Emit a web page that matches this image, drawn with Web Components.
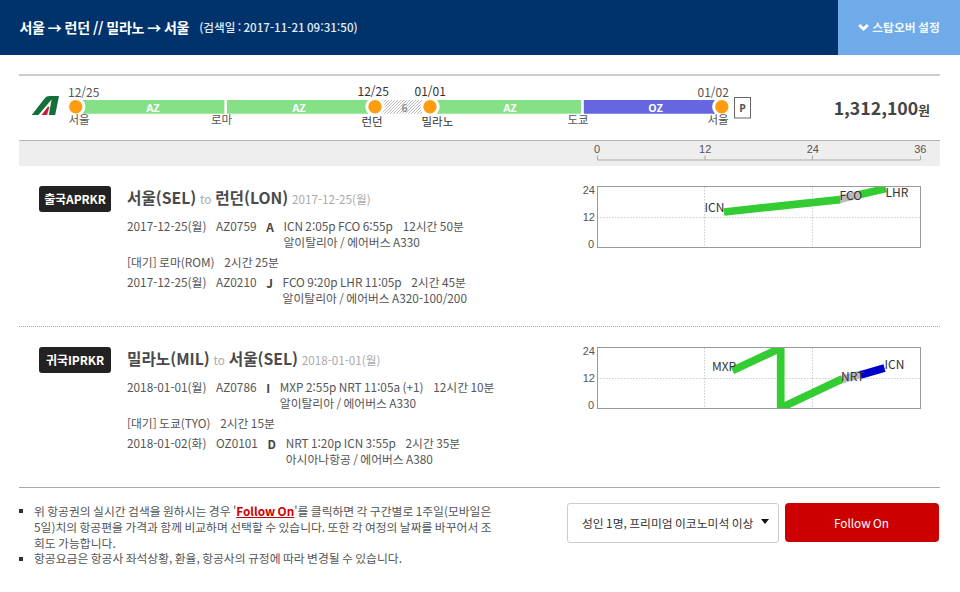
<!DOCTYPE html>
<html lang="ko">
<head>
<meta charset="utf-8">
<title>서울 → 런던 // 밀라노 → 서울</title>
<style>
  body {
    margin: 0;
    height: 592px;
    overflow: hidden;
    background: #fff;
    color: #555;
    font-family: "Noto Sans CJK KR", sans-serif;
    font-size: 11.8px;
    line-height: 16px;
    word-spacing: -0.9px;
  }
</style>
</head>
<body>
<fare-page></fare-page>

<script>
const define = (name, html, init) => {
  const template = document.createElement("template");
  template.innerHTML = html;
  customElements.define(
    name,
    class extends HTMLElement {
      constructor() {
        super();
        this.attachShadow({ mode: "open" }).appendChild(template.content.cloneNode(true));
      }

      connectedCallback() {
        if (init) init(this, this.shadowRoot);
      }
    }
  );
};

define("search-header", `
<style>
  :host {
    display: flex;
    justify-content: space-between;
    height: 54.6px;
    background: #00336c;
    color: #fff;
  }

  .title {
    display: flex;
    align-items: center;
    gap: 10px;
    padding-left: 19.5px;
    white-space: nowrap;
  }

  h1 {
    margin: 0;
    font-size: 14px;
    font-weight: 700;
    letter-spacing: -0.3px;
    word-spacing: -0.5px;
    line-height: 20px;
  }

  .date {
    font-size: 11.6px;
    font-weight: 500;
    color: #e4ebf3;
  }

  .stopover {
    display: flex;
    align-items: center;
    justify-content: center;
    gap: 3px;
    width: 122px;
    background: #6eabe8;
    font-size: 11.8px;
    font-weight: 700;
    color: #f2f7fd;
    box-sizing: border-box;
  }
</style>
<div class="title">
  <h1><slot></slot></h1>
  <span class="date"><slot name="date"></slot></span>
</div>
<div class="stopover">
  <svg width="11" height="8" viewBox="0 0 11 8"><path d="M1.2 2 5.5 6 9.8 2" fill="none" stroke="#fff" stroke-width="3"/></svg>
  <span><slot name="action"></slot></span>
</div>
`);

define("fare-timeline", `
<style>
  :host {
    display: flex;
    align-items: center;
    justify-content: space-between;
    height: 64px;
    border-top: 2px solid #ccc;
    border-bottom: 1px solid #b4b4b4;
  }

  svg {
    display: block;
    font-size: 12px;
  }

  .airline {
    font: 700 10.5px "Open Sans", sans-serif;
    fill: #fff;
    text-anchor: middle;
  }

  .price {
    padding: 2px 10px 0 0;
    font-size: 17.7px;
    font-weight: 700;
    line-height: 24px;
    color: #444;
  }

  .price small {
    font-size: 12.8px;
  }
</style>
<svg width="740" height="64" viewBox="19 76 740 64" fill="#555">
  <defs>
    <pattern id="hatch" width="3" height="3" patternUnits="userSpaceOnUse">
      <path d="M-1 1 1 -1M0 3 3 0M2 4 4 2" stroke="#aaa" stroke-width=".8"/>
    </pattern>
  </defs>
  <path d="M31.7 115 44.6 98.4Q46.4 96 49.5 96H59L55.2 115H48.8L51.6 99.5 38.4 115Z" fill="#14703a"/>
  <path d="M41.5 115 48 106.5 49.4 107 47 115Z" fill="#c31f3c"/>
  <path d="M76 100h148.4v13.7H76zM227 100h148v13.7H227zM430 100h151v13.7H430z" fill="#86e085"/>
  <path d="M583.8 100H722v13.7H583.8z" fill="#6666e0"/>
  <path d="M375 100h55v13.7h-55z" fill="url(#hatch)"/>
  <g fill="#ff9c10" stroke="#fff" stroke-width="3">
    <circle cx="75.7" cy="106.8" r="8.2"/><circle cx="375" cy="106.8" r="8.2"/>
    <circle cx="430" cy="106.8" r="8.2"/><circle cx="721.8" cy="106.8" r="8.2"/>
  </g>
  <text class="airline" x="153" y="111.5">AZ</text>
  <text class="airline" x="299" y="111.5">AZ</text>
  <text class="airline" x="510" y="111.5">AZ</text>
  <text class="airline" x="655.5" y="111.5">OZ</text>
  <text class="airline" x="404.5" y="111.5" style="fill: #888; font-weight: 600">6</text>
  <text x="68" y="97">12/25</text>
  <text x="68.5" y="124" font-size="11.5">서울</text>
  <text x="211" y="124" font-size="11.5">로마</text>
  <text x="357.5" y="96" fill="#333">12/25</text>
  <text x="361.5" y="126" fill="#333" font-size="11.5">런던</text>
  <text x="414.5" y="96" fill="#333">01/01</text>
  <text x="421.5" y="126" fill="#333" font-size="11.5">밀라노</text>
  <text x="567.5" y="124" font-size="11.5">도쿄</text>
  <text x="697.5" y="97">01/02</text>
  <text x="707.5" y="124" font-size="11.5">서울</text>
  <rect x="734.5" y="97.5" width="16" height="20.5" fill="#fff" stroke="#666"/>
  <text x="742.6" y="112" font-family="Open Sans" font-size="10.5" font-weight="700" text-anchor="middle">P</text>
</svg>
<div class="price"><slot></slot><small>원</small></div>
`);

define("hour-axis", `
<style>
  :host {
    display: flex;
    justify-content: flex-end;
    height: 25px;
    background: #eee;
  }

  svg {
    font: 11px "Liberation Sans", sans-serif;
    fill: #555;
    text-anchor: middle;
  }
</style>
<svg width="370" height="25" viewBox="570 141 370 25">
  <path d="M597.5 155.5V160H920.5V155.5M705 155.5V160M812.5 155.5V160" fill="none" stroke="#aaa"/>
  <text x="597" y="153">0</text>
  <text x="705.2" y="153">12</text>
  <text x="812.8" y="153">24</text>
  <text x="920.3" y="153">36</text>
</svg>
`);

// Local hour (y, 0-24) against elapsed hours (x, 0-36)
define("day-chart", `
<style>
  :host {
    display: block;
  }

  svg {
    display: block;
    overflow: hidden;
    font-size: 12px;
    fill: #333;
  }

  .scale {
    font: 11px "Liberation Sans", sans-serif;
    fill: #555;
    text-anchor: end;
  }
</style>
<svg width="370" height="80" viewBox="570 180 370 80">
  <path d="M597 217.5H920M704.5 187V247M812.5 187V247" stroke="#ccc" stroke-dasharray="1.5 1.5"/>
  <rect x="597.5" y="186.5" width="323" height="61" fill="none" stroke="#999"/>
  <svg x="598" y="187" width="322" height="60" viewBox="598 187 322 60" id="lines"></svg>
  <text class="scale" x="595" y="193.5">24</text>
  <text class="scale" x="595" y="221">12</text>
  <text class="scale" x="594" y="248">0</text>
  <g id="labels"></g>
</svg>
`, (host, root) => {
  const { lines, labels } = JSON.parse(host.getAttribute("data"));
  root.querySelector("#lines").innerHTML = lines
    .map(([color, points]) => `<polyline points="${points}" fill="none" stroke="${color}" stroke-width="7.7"/>`)
    .join("");
  root.querySelector("#labels").innerHTML = labels
    .map(([text, x, y]) => `<text x="${x}" y="${y}">${text}</text>`)
    .join("");
});

define("flight-leg", `
<style>
  :host {
    display: flex;
    gap: 9.7px;
    height: 31.6px;
    line-height: 15.8px;
    white-space: nowrap;
  }

  b {
    padding-top: 1px;
    color: #444;
  }

  .time {
    display: flex;
    gap: 9.7px;
  }
</style>
<slot name="date"></slot>
<slot name="number"></slot>
<b><slot name="cabin"></slot></b>
<div>
  <div class="time"><slot name="time"></slot><slot name="duration"></slot></div>
  <slot name="plane"></slot>
</div>
`);

define("trip-section", `
<style>
  :host {
    display: grid;
    grid-template-columns: 108px 443px 370px;
    height: 161px;
    align-items: start;
    box-sizing: border-box;
    padding-top: 14px;
    border-bottom: 1px dotted #aaa;
  }

  .tag {
    justify-self: start;
    width: 72px;
    height: 26px;
    margin: 6px 0 0 20px;
    border-radius: 3px;
    background: #222;
    color: #fff;
    font-size: 12px;
    font-weight: 700;
    line-height: 26px;
    text-align: center;
    letter-spacing: -0.1px;
  }

  h2 {
    display: flex;
    align-items: baseline;
    gap: 3.8px;
    margin: 6px 0 6.8px;
    font-size: 15.7px;
    font-weight: 700;
    line-height: 24px;
    color: #4a4a4a;
    white-space: nowrap;
  }

  small {
    font-size: 11.7px;
    font-weight: 400;
    color: #aaa;
  }

  .legs {
    display: flex;
    flex-direction: column;
    gap: 4.5px;
  }
</style>
<div class="tag"><slot name="tag"></slot></div>
<div>
  <h2><slot name="from"></slot><small>to</small><slot name="to"></slot><small><slot name="day"></slot></small></h2>
  <div class="legs"><slot></slot></div>
</div>
<slot name="chart"></slot>
`);

define("layover-row", `
<style>
  :host {
    display: flex;
    gap: 9.7px;
    white-space: nowrap;
  }
</style>
<slot></slot>
<slot name="duration"></slot>
`);

define("fare-footer", `
<style>
  :host {
    display: flex;
    justify-content: space-between;
    align-items: flex-start;
    padding: 15px 1.5px 0 0;
  }

  ul {
    width: 460px;
    margin: 0;
    padding: 0 0 0 15px;
    line-height: 15.8px;
    list-style: none;
  }

  li::before {
    content: "";
    float: left;
    width: 4px;
    height: 4px;
    margin: 6.5px 0 0 -15px;
    background: #333;
  }

  .line {
    display: block;
    white-space: nowrap;
  }

  u {
    color: #c00;
    font-weight: 700;
  }

  .actions {
    display: flex;
    gap: 6px;
  }

  .select {
    display: flex;
    align-items: center;
    justify-content: space-between;
    width: 211.5px;
    height: 40px;
    box-sizing: border-box;
    padding: 0 9px 0 14px;
    border: 1px solid #ccc;
    border-radius: 3px;
    color: #333;
    white-space: nowrap;
  }

  .follow {
    width: 154px;
    height: 39px;
    border-radius: 4px;
    background: #c00;
    color: #fff;
    line-height: 39px;
    text-align: center;
  }
</style>
<ul>
  <li>
    <span class="line">위 항공권의 실시간 검색을 원하시는 경우 '<u>Follow On</u>'를 클릭하면 각 구간별로 1주일(모바일은</span>
    <span class="line">5일)치의 항공편을 가격과 함께 비교하며 선택할 수 있습니다. 또한 각 여정의 날짜를 바꾸어서 조</span>
    <span class="line">회도 가능합니다.</span>
  </li>
  <li><span class="line">항공요금은 항공사 좌석상황, 환율, 항공사의 규정에 따라 변경될 수 있습니다.</span></li>
</ul>
<div class="actions">
  <div class="select">
    <span><slot></slot></span>
    <svg width="8" height="9" viewBox="0 0 8 9"><path d="M0 1h8L4 6z" fill="#111"/></svg>
  </div>
  <div class="follow">Follow On</div>
</div>
`);

define("fare-page", `
<style>
  :host {
    display: block;
  }

  main {
    padding: 19.4px 20px 0 19px;
  }

  trip-section:last-of-type {
    border-bottom: 1px solid #aaa;
  }
</style>
<search-header>
  서울 → 런던 // 밀라노 → 서울
  <span slot="date">(검색일 : 2017-11-21 09:31:50)</span>
  <span slot="action">스탑오버 설정</span>
</search-header>
<main>
  <fare-timeline>1,312,100</fare-timeline>
  <hour-axis></hour-axis>
  <trip-section>
    <span slot="tag">출국APRKR</span>
    <span slot="from">서울(SEL)</span>
    <span slot="to">런던(LON)</span>
    <span slot="day">2017-12-25(월)</span>
    <flight-leg>
      <span slot="date">2017-12-25(월)</span>
      <span slot="number">AZ0759</span>
      <span slot="cabin">A</span>
      <span slot="time">ICN 2:05p FCO 6:55p</span>
      <span slot="duration">12시간 50분</span>
      <span slot="plane">알이탈리아 / 에어버스 A330</span>
    </flight-leg>
    <layover-row><span>[대기] 로마(ROM)</span><span slot="duration">2시간 25분</span></layover-row>
    <flight-leg>
      <span slot="date">2017-12-25(월)</span>
      <span slot="number">AZ0210</span>
      <span slot="cabin">J</span>
      <span slot="time">FCO 9:20p LHR 11:05p</span>
      <span slot="duration">2시간 45분</span>
      <span slot="plane">알이탈리아 / 에어버스 A320-100/200</span>
    </flight-leg>
    <day-chart slot="chart" data='{
      "lines": [["#bbb", "839,199.5 861,194"], ["#33cc33", "724,212 840,199.6"], ["#33cc33", "860,194.5 886,188.5"]],
      "labels": [["ICN", 704.5, 212], ["FCO", 839.5, 200], ["LHR", 885.5, 197]]
    }'></day-chart>
  </trip-section>
  <trip-section>
    <span slot="tag">귀국IPRKR</span>
    <span slot="from">밀라노(MIL)</span>
    <span slot="to">서울(SEL)</span>
    <span slot="day">2018-01-01(월)</span>
    <flight-leg>
      <span slot="date">2018-01-01(월)</span>
      <span slot="number">AZ0786</span>
      <span slot="cabin">I</span>
      <span slot="time">MXP 2:55p NRT 11:05a (+1)</span>
      <span slot="duration">12시간 10분</span>
      <span slot="plane">알이탈리아 / 에어버스 A330</span>
    </flight-leg>
    <layover-row><span>[대기] 도쿄(TYO)</span><span slot="duration">2시간 15분</span></layover-row>
    <flight-leg>
      <span slot="date">2018-01-02(화)</span>
      <span slot="number">OZ0101</span>
      <span slot="cabin">D</span>
      <span slot="time">NRT 1:20p ICN 3:55p</span>
      <span slot="duration">2시간 35분</span>
      <span slot="plane">아시아나항공 / 에어버스 A380</span>
    </flight-leg>
    <day-chart slot="chart" data='{
      "lines": [["#bbb", "840,219 862,213"], ["#33cc33", "732.5,209.5 780.7,187 780.7,247 842,218"], ["#0000cc", "860.5,214 884.5,207"]],
      "labels": [["MXP", 712, 209.5], ["NRT", 841, 219.5], ["ICN", 884.5, 207.5]]
    }'></day-chart>
  </trip-section>
  <fare-footer>성인 1명, 프리미엄 이코노미석 이상</fare-footer>
</main>
`);
</script>
</body>
</html>
